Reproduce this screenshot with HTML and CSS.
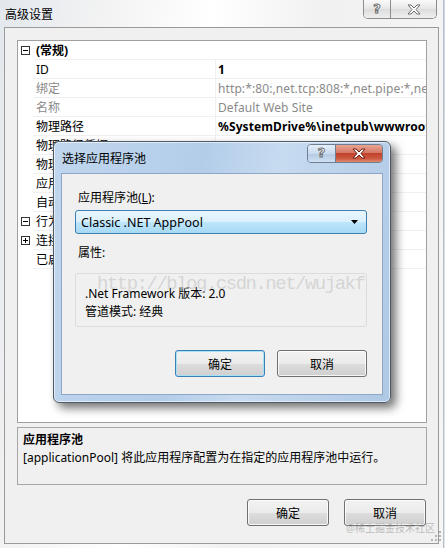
FILE: index.html
```html
<!DOCTYPE html>
<html lang="zh-CN">
<head>
    <meta charset="UTF-8">
    <title>高级设置</title>
    <link rel="stylesheet" href="styles.css">
</head>
<body>
    <div class="window">
        <div class="titlebar">
            <span class="title">高级设置</span>
            <div class="caption inactive">
                <span class="cap-help">?</span>
                <span class="cap-close">
                    <svg width="14" height="11" viewBox="0 0 14 11"><path d="M1 1h3l3 3 3-3h3L9 5.5 13 10h-3L7 7l-3 3H1l4-4.5z" fill="#fff" stroke="#6d6d6d" stroke-width="1"/></svg>
                </span>
            </div>
        </div>

        <div class="client">
            <!-- 属性列表 -->
            <div class="grid">
                <div class="row cat">
                    <span class="margin"><svg width="9" height="9" viewBox="0 0 9 9"><rect x="0.5" y="0.5" width="8" height="8" fill="#fff" stroke="#333"/><path d="M2 4.5h5" stroke="#000"/></svg></span>
                    <span class="name">(常规)</span>
                </div>
                <div class="row"><span class="margin"></span><span class="name">ID</span><span class="val bold">1</span></div>
                <div class="row"><span class="margin"></span><span class="name dim">绑定</span><span class="val dim">http:*:80:,net.tcp:808:*,net.pipe:*,net.msmq:localhost</span></div>
                <div class="row"><span class="margin"></span><span class="name dim">名称</span><span class="val dim">Default Web Site</span></div>
                <div class="row"><span class="margin"></span><span class="name">物理路径</span><span class="val bold">%SystemDrive%\inetpub\wwwroot</span></div>
                <div class="row"><span class="margin"></span><span class="name">物理路径凭据</span><span class="val"></span></div>
                <div class="row"><span class="margin"></span><span class="name">物理路径凭据登录类型</span><span class="val">ClearText</span></div>
                <div class="row"><span class="margin"></span><span class="name">应用程序池</span><span class="val">DefaultAppPool</span></div>
                <div class="row"><span class="margin"></span><span class="name">自动启动</span><span class="val">True</span></div>
                <div class="row cat">
                    <span class="margin"><svg width="9" height="9" viewBox="0 0 9 9"><rect x="0.5" y="0.5" width="8" height="8" fill="#fff" stroke="#333"/><path d="M2 4.5h5" stroke="#000"/></svg></span>
                    <span class="name plain">行为</span>
                </div>
                <div class="row cat">
                    <span class="margin"><svg width="9" height="9" viewBox="0 0 9 9"><rect x="0.5" y="0.5" width="8" height="8" fill="#fff" stroke="#333"/><path d="M2 4.5h5M4.5 2v5" stroke="#000"/></svg></span>
                    <span class="name plain">连接限制</span>
                </div>
                <div class="row"><span class="margin"></span><span class="name">已启用的协议</span><span class="val">http</span></div>
            </div>

            <div class="desc">
                <div class="desc-title">应用程序池</div>
                <div>[applicationPool] 将此应用程序配置为在指定的应用程序池中运行。</div>
            </div>

            <div class="btn-row">
                <button class="btn">确定</button>
                <button class="btn">取消</button>
            </div>
        </div>
    </div>

    <!-- 选择应用程序池 对话框 -->
    <div class="dialog">
        <div class="dlg-titlebar">
            <span class="title">选择应用程序池</span>
            <div class="caption">
                <span class="cap-help">?</span>
                <span class="cap-close red">
                    <svg width="14" height="11" viewBox="0 0 14 11"><path d="M1 1h3l3 3 3-3h3L9 5.5 13 10h-3L7 7l-3 3H1l4-4.5z" fill="#fff" stroke="#6b1d12" stroke-width="1"/></svg>
                </span>
            </div>
        </div>
        <div class="dlg-client">
            <div class="label">应用程序池(<u>L</u>):</div>
            <div class="combo">
                <span>Classic .NET AppPool</span>
                <svg width="7" height="4" viewBox="0 0 7 4"><path d="M0 0h7L3.5 4z" fill="#000"/></svg>
            </div>
            <div class="label props-label">属性:</div>
            <div class="props">
                <div>.Net Framework 版本: 2.0</div>
                <div>管道模式: 经典</div>
            </div>
            <div class="dlg-btns">
                <button class="btn wide focus">确定</button>
                <button class="btn wide">取消</button>
            </div>
        </div>
    </div>

    <div class="wm-csdn">http://blog.csdn.net/wujakf</div>
    <div class="wm-juejin">@稀土掘金技术社区</div>
    <svg class="grip" width="10" height="10" viewBox="0 0 10 10"><g fill="#b5b5b5"><rect x="8" y="0" width="2" height="2"/><rect x="4" y="4" width="2" height="2"/><rect x="8" y="4" width="2" height="2"/><rect x="0" y="8" width="2" height="2"/><rect x="4" y="8" width="2" height="2"/><rect x="8" y="8" width="2" height="2"/></g></svg>
</body>
</html>
```

FILE: styles.css
```css
body {
    margin: 0;
    width: 445px;
    height: 548px;
    overflow: hidden;
    position: relative;
    font-family: "Noto Sans", "Noto Sans CJK SC", sans-serif;
    font-size: 12px;
    color: #000;
    background: linear-gradient(to bottom, #c9d8e8, #dfe7ef);
}

/* 外层窗口 */
.window {
    width: 444px;
    height: 548px;
    box-sizing: border-box;
    padding: 0 4px 4px;
    display: flex;
    flex-direction: column;
    background: linear-gradient(100deg, #e3e8ee 0%, #f3f3f3 20%, #ffffff 40%, #f1f1f1 60%, #f6f6f6 100%);
    border-right: 1px solid #b9bec4;
}

.titlebar {
    height: 27px;
    display: flex;
    align-items: flex-start;
    justify-content: space-between;
    flex-shrink: 0;
}

.titlebar .title {
    margin-left: 1px;
    line-height: 29px;
    font-size: 12px;
}

.caption {
    display: flex;
    height: 18px;
    border: 1px solid #8d8d8d;
    border-top: none;
    border-radius: 0 0 5px 5px;
    overflow: hidden;
    margin-right: 2px;
}

.cap-help {
    width: 26px;
    border-right: 1px solid #8d8d8d;
    text-align: center;
    font-family: "DejaVu Sans", sans-serif;
    font-weight: bold;
    font-size: 13px;
    line-height: 17px;
    color: #fff;
    -webkit-text-stroke: 1px #6d6d6d;
    background: linear-gradient(#fafafa, #e6e6e6 50%, #dcdcdc 51%, #efefef);
}

.cap-close {
    width: 45px;
    display: flex;
    align-items: center;
    justify-content: center;
    background: linear-gradient(#fafafa, #e6e6e6 50%, #dcdcdc 51%, #efefef);
}

.cap-close.red {
    background: linear-gradient(#e8a493, #d57a66 45%, #c2422c 50%, #cc5a41 80%, #e08c70);
}

.client {
    flex: 1;
    display: flex;
    flex-direction: column;
    border: 1px solid #9a9a9a;
    background-color: #f0f0f0;
    padding: 12px 11px 17px 12px;
}

/* 属性网格 */
.grid {
    flex: 1;
    border: 1px solid #a0a0a0;
    background-color: #fff;
    overflow: hidden;
}

.row {
    display: grid;
    grid-template-columns: 15px 182px 1fr;
    height: 19px;
    line-height: 19px;
    white-space: nowrap;
}

.row .name,
.row .val {
    border-bottom: 1px solid #f0f0f0;
    box-sizing: border-box;
    overflow: hidden;
}

.row .name {
    padding-left: 3px;
}

.row .val {
    padding-left: 2px;
    border-left: 1px solid #f0f0f0;
    letter-spacing: 0.1px;
}

.row.cat .name {
    grid-column: 2 / 4;
    font-weight: bold;
}

.row.cat .name.plain {
    font-weight: normal;
}

.margin {
    display: flex;
    align-items: center;
    padding-left: 3px;
}

.bold {
    font-weight: bold;
}

.dim {
    color: #8a8a8a;
}

.desc {
    height: 58px;
    box-sizing: border-box;
    margin-top: 4px;
    border: 1px solid #a7a7a7;
    padding: 3px 5px;
    line-height: 18px;
}

.desc-title {
    font-weight: bold;
}

.btn-row {
    display: flex;
    justify-content: flex-end;
    gap: 15px;
    margin-top: 14px;
    padding-right: 1px;
}

.btn {
    width: 82px;
    height: 27px;
    font-family: inherit;
    font-size: 12px;
    color: #000;
    border: 1px solid #707070;
    border-radius: 3px;
    background: linear-gradient(#f2f2f2 0%, #ebebeb 50%, #dddddd 51%, #cfcfcf 100%);
    box-shadow: inset 0 0 0 1px rgba(255, 255, 255, 0.8);
    padding: 0;
}

.btn.wide {
    width: 90px;
}

.btn.focus {
    border-color: #3c7fb1;
    box-shadow: inset 0 0 0 1px #a7e1f7;
}

/* 选择应用程序池 对话框 */
.dialog {
    position: absolute;
    left: 53px;
    top: 141px;
    width: 338px;
    height: 262px;
    box-sizing: border-box;
    padding: 0 7px 7px;
    display: flex;
    flex-direction: column;
    border: 1px solid #4d5966;
    border-radius: 6px;
    background: linear-gradient(100deg, #c0d6ee 0%, #b3cde9 40%, #c7dbf0 60%, #aec8e5 100%);
    box-shadow: inset 0 0 0 1px rgba(255, 255, 255, 0.6), 5px 5px 10px rgba(0, 0, 0, 0.55);
}

.dlg-titlebar {
    height: 31px;
    display: flex;
    align-items: flex-start;
    justify-content: space-between;
    flex-shrink: 0;
}

.dlg-titlebar .title {
    line-height: 33px;
    padding-left: 1px;
}

.dlg-titlebar .caption {
    margin-top: 2px;
    margin-right: 0;
    border: 1px solid #6e7f92;
    border-radius: 4px;
    height: 17px;
}

.dlg-titlebar .cap-help {
    width: 27px;
    border-right-color: #6e7f92;
    line-height: 16px;
    background: linear-gradient(#e4eef8, #c9dbee 50%, #b2c9e2 51%, #cfe0f1);
}

.dlg-titlebar .cap-close {
    width: 46px;
}

.dlg-client {
    flex: 1;
    display: flex;
    flex-direction: column;
    border: 1px solid #8ea7c4;
    background-color: #f0f0f0;
    padding: 15px 15px 17px 13px;
}

.label {
    line-height: 18px;
    padding-left: 3px;
}

.combo {
    height: 24px;
    box-sizing: border-box;
    margin-top: 3px;
    display: flex;
    align-items: center;
    justify-content: space-between;
    padding: 0 8px 0 5px;
    border: 1px solid #3c7fb1;
    border-radius: 3px;
    background: linear-gradient(#eaf6fd 0%, #d9f0fc 50%, #bee6fd 51%, #a7d9f5 100%);
    font-size: 12.5px;
}

.props-label {
    margin-top: 10px;
}

.props {
    height: 54px;
    box-sizing: border-box;
    margin-top: 11px;
    padding: 11px 9px 0;
    border: 1px solid #dcdcdc;
    border-radius: 3px;
    line-height: 18px;
}

.dlg-btns {
    display: flex;
    justify-content: flex-end;
    gap: 12px;
    margin-top: 23px;
}

/* 水印 */
.wm-csdn {
    position: absolute;
    left: 97px;
    top: 273px;
    font-family: "Liberation Mono", monospace;
    font-size: 19px;
    letter-spacing: -1.5px;
    color: rgba(190, 190, 190, 0.55);
}

.wm-juejin {
    position: absolute;
    left: 346px;
    top: 520px;
    font-size: 10px;
    color: rgba(150, 150, 150, 0.6);
}

.grip {
    position: absolute;
    left: 431px;
    top: 531px;
}
```
